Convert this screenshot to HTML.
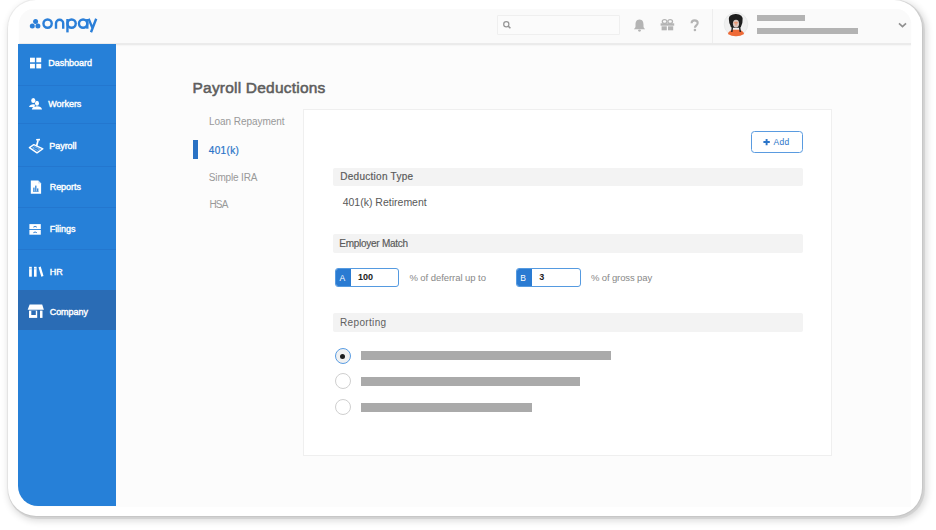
<!DOCTYPE html>
<html><head><meta charset="utf-8">
<style>
*{box-sizing:border-box;margin:0;padding:0}
html,body{width:936px;height:530px;overflow:hidden;background:#fff;font-family:"Liberation Sans",sans-serif}
div,svg{position:absolute}
.t{white-space:pre;line-height:1}
#frame{left:8px;top:0px;width:914px;height:516px;border-radius:28px;background:#fff;box-shadow:0 0 0 1px rgba(0,0,0,0.045),1.5px 1.5px 0 1.5px rgba(0,0,0,0.065),2.5px 3px 7px 2px rgba(0,0,0,0.14)}
#app{left:18.5px;top:9px;width:892.5px;height:498px;border-radius:15px 15px 0 20px;background:#fcfcfc;overflow:hidden}
#topbar{left:18.5px;top:9px;width:892.5px;height:35.8px;background:#fafafa;border-bottom:2px solid #ebebeb;box-shadow:0 1px 1.5px rgba(0,0,0,0.03);border-radius:15px 15px 0 0}
#side{left:18px;top:43.5px;width:98.4px;height:462.5px;background:#2680d8;border-radius:0 0 0 20px;overflow:hidden}
.sep{left:0;width:98px;height:1px;background:#2377cf}
.st{left:48.3px;color:#fff;font-size:9px;-webkit-text-stroke:0.4px #fff;letter-spacing:-0.05px}
.card{left:303px;top:109px;width:529px;height:347px;background:#fff;border:1px solid #efefef}
.bar{left:333px;width:470px;height:18px;background:#f3f3f3;border-radius:2px}
.hd{color:#5a5a5a;font-size:10px;-webkit-text-stroke:0.18px #5a5a5a}
.gray{height:9px;background:#aaa}
.radio{width:16px;height:16px;border-radius:50%;border:1.2px solid #cfcfcf;background:#fff}
</style></head><body>
<div id="frame"></div>
<div id="app"></div>
<div id="topbar"></div>

<!-- logo -->
<svg style="left:26px;top:14px" width="76" height="22" viewBox="26 14 76 22">
  <g fill="#2b7fd8">
    <circle cx="35.6" cy="21.6" r="2.5"/>
    <circle cx="32.3" cy="26.1" r="2.5"/>
    <circle cx="37.9" cy="26.1" r="2.5"/>
  </g>
  <g fill="none" stroke="#2b7fd8" stroke-width="2.4">
    <circle cx="47.6" cy="23.6" r="4.15"/>
    <path d="M56 28.7 V23.3 A3.6 3.6 0 0 1 63.2 23.3 V28.7"/>
    <circle cx="71.6" cy="23.6" r="4.15"/>
    <path d="M67.45 19 V32.4"/>
    <circle cx="83.1" cy="23.6" r="4.15"/>
    <path d="M87.3 19 V28.7"/>
    <path d="M88.6 18.8 L92.3 27.6 M96.2 18.8 L91 32.2"/>
  </g>
</svg>

<!-- search -->
<div style="left:497px;top:15px;width:123px;height:20px;border:1px solid #efefef;background:#fbfbfb;border-radius:1px"></div>
<svg style="left:502px;top:19px" width="12" height="12" viewBox="0 0 12 12"><circle cx="4.3" cy="5.2" r="2.6" fill="none" stroke="#969696" stroke-width="1.25"/><path d="M6.2 7.1 L8.4 9.3" stroke="#969696" stroke-width="1.5"/></svg>
<!-- bell -->
<svg style="left:630px;top:16px" width="20" height="18" viewBox="630 16 20 18"><path d="M639.5 19.4 C636.1 19.4 635.5 22.3 635.5 24.8 L635.5 26.6 C635.5 27.7 634.6 28.3 633.9 29.3 L645.1 29.3 C644.4 28.3 643.5 27.7 643.5 26.6 L643.5 24.8 C643.5 22.3 642.9 19.4 639.5 19.4Z" fill="#b4b4b4"/><ellipse cx="639.5" cy="30.6" rx="1.5" ry="1.1" fill="#b4b4b4"/></svg>
<!-- gift -->
<svg style="left:658px;top:16px" width="19" height="17" viewBox="658 16 19 17"><g fill="none" stroke="#b4b4b4" stroke-width="1.3"><ellipse cx="664.6" cy="21.6" rx="2.3" ry="1.9"/><ellipse cx="670.2" cy="21.6" rx="2.3" ry="1.9"/></g><g fill="#b4b4b4"><rect x="660.6" y="23.3" width="13.6" height="2.4"/><rect x="661.6" y="26.3" width="5.2" height="4"/><rect x="668" y="26.3" width="5.2" height="4"/></g></svg>
<!-- question -->
<svg style="left:688px;top:17px" width="13" height="16" viewBox="688 17 13 16"><path d="M691.6 23.3 C691.6 21.2 692.9 20.4 694.5 20.4 C696.3 20.4 697.7 21.4 697.7 23 C697.7 25.3 694.9 25.4 694.9 27.8" fill="none" stroke="#b4b4b4" stroke-width="2.1"/><circle cx="694.9" cy="30" r="1.3" fill="#b4b4b4"/></svg>
<div style="left:712px;top:9px;width:1px;height:34px;background:#eeeeee"></div>
<!-- avatar -->
<svg style="left:723px;top:11px" width="27" height="27" viewBox="723 11 27 27">
  <circle cx="736" cy="24.2" r="11.8" fill="#f0f0f0" stroke="#e4e6e6" stroke-width="0.7"/>
  <path d="M727.8 34 Q729.5 30.3 733 29.8 L739 29.8 Q742.5 30.3 744.2 34 Q740.5 36.3 736 36.3 Q731.5 36.3 727.8 34Z" fill="#ee6a37"/>
  <path d="M729 20.5 Q728.3 17 730.5 15.6 Q732.5 14 735.8 14.1 Q739.3 14 741.3 15.8 Q743.3 17.6 742.5 21 Q742.6 23.5 741.5 25.2 Q741.3 27.5 739.5 27.8 L732.2 27.8 Q730.4 27.5 730.3 25.2 Q729 23.3 729 20.5Z" fill="#1e1e1e"/>
  <ellipse cx="736" cy="23.6" rx="3.1" ry="3.9" fill="#d9c6bf"/>
  <path d="M733.8 22.8 H738.2 M736 21.5 V25.5" stroke="#f08a5d" stroke-width="0.9"/>
  <path d="M732.4 27.2 L731.8 32 M739.6 27.2 L740.3 32" stroke="#1e1e1e" stroke-width="1.4"/>
</svg>
<div style="left:757px;top:15px;width:48px;height:6px;background:#b3b3b3"></div>
<div style="left:757px;top:28.2px;width:101px;height:6px;background:#b3b3b3"></div>
<svg style="left:897px;top:21px" width="11" height="8" viewBox="0 0 11 8"><path d="M2 2.4 L5.5 5.7 L9 2.4" fill="none" stroke="#909090" stroke-width="1.7"/></svg>

<!-- sidebar -->
<div id="side">
  <div class="sep" style="top:41px"></div>
  <div class="sep" style="top:79.5px"></div>
  <div class="sep" style="top:122px"></div>
  <div class="sep" style="top:163px"></div>
  <div class="sep" style="top:205.2px"></div>
  <div style="left:0;top:246px;width:98.4px;height:40px;background:#2a6cb5"></div>
</div>
<div class="t st" style="top:59.2px">Dashboard</div>
<div class="t st" style="top:99.8px">Workers</div>
<div class="t st" style="top:141.8px;left:49.3px">Payroll</div>
<div class="t st" style="top:182.8px;left:49.7px">Reports</div>
<div class="t st" style="top:225.2px;left:49.7px">Filings</div>
<div class="t st" style="top:267.6px;left:49.7px">HR</div>
<div class="t st" style="top:308.4px;left:49.7px">Company</div>

<!-- sidebar icons -->
<svg style="left:28px;top:55px" width="16" height="16" viewBox="28 55 16 16"><g fill="#fff"><rect x="30" y="57.7" width="4.9" height="4.6"/><rect x="36.3" y="57.7" width="4.9" height="4.6"/><rect x="30" y="63.8" width="4.9" height="4.6"/><rect x="36.3" y="63.8" width="4.9" height="4.6"/></g></svg>
<svg style="left:27px;top:96px" width="18" height="16" viewBox="27 96 18 16"><g fill="#fff"><ellipse cx="33.3" cy="100.6" rx="2.1" ry="2.5"/><path d="M29 107 Q30 104.3 33.5 104.3 Q34.5 104.3 35 104.8 L35 107.3Z"/><ellipse cx="37" cy="103.2" rx="2" ry="2.5"/><path d="M31.8 109.6 Q32.5 106.3 37 106.3 Q41.3 106.3 42 109.6Z"/></g><path d="M35 105.6 L35 106.8" stroke="#2680d8" stroke-width="0.8"/></svg>
<svg style="left:27px;top:137px" width="18" height="18" viewBox="27 137 18 18"><g fill="none" stroke="#fff" stroke-linejoin="round"><path d="M29.4 147.6 L33.8 144.7 L42.9 148.8 L37 152.9 Z" stroke-width="1.4"/><path d="M32.6 148 L34.6 146.8 L39.8 149 L37.6 150.4Z" stroke-width="0.7" stroke-opacity="0.55"/><path d="M36.5 146.3 L38.1 140.3" stroke-width="1.7"/><path d="M36.2 139.8 L40 139.6" stroke-width="1.6"/></g></svg>
<svg style="left:28px;top:178px" width="16" height="18" viewBox="28 178 16 18"><path d="M30.8 180.6 L38.2 180.6 L41.1 183.6 L41.1 193.7 L30.8 193.7Z" fill="#fff"/><path d="M38.2 180.6 L38.2 183.6 L41.1 183.6Z" fill="#cfe2f6"/><g fill="#3a8ad9"><rect x="33.2" y="187.6" width="1.4" height="3.9"/><rect x="35.1" y="185.6" width="1.4" height="5.9"/><rect x="37" y="188.4" width="1.4" height="3.1"/><rect x="33" y="191.2" width="5.6" height="0.6"/></g></svg>
<svg style="left:27px;top:221px" width="16" height="16" viewBox="27 221 16 16"><g fill="#fff"><rect x="29.4" y="224.1" width="11.4" height="5"/><rect x="29.4" y="230" width="11.4" height="4.7"/></g><g fill="none" stroke="#2a7ad0" stroke-width="1"><path d="M33.4 227.1 Q35.1 225.7 36.8 227.1"/><path d="M33.4 232.7 Q35.1 231.3 36.8 232.7"/></g></svg>
<svg style="left:27px;top:264px" width="18" height="15" viewBox="27 264 18 15"><g fill="#fff"><rect x="29.1" y="266.8" width="2.7" height="9.9"/><rect x="34" y="266.8" width="2.6" height="9.9"/><path d="M38.5 267.3 L40.7 266.6 L43.5 275.9 L41.3 276.7Z"/></g><g fill="#6aa6e6"><rect x="29.1" y="268.6" width="2.7" height="0.6"/><rect x="34" y="268.6" width="2.6" height="0.6"/></g></svg>
<svg style="left:26px;top:302px" width="20" height="18" viewBox="26 302 20 18"><g fill="#fff"><path d="M29.6 304.5 L42.2 304.5 L43.9 309.8 L27.7 309.8Z"/><rect x="29" y="310.6" width="8.2" height="7.3"/><rect x="40" y="310.6" width="2.5" height="7.3"/></g><rect x="31.3" y="310.6" width="4.5" height="4.4" fill="#2a6cb5"/></svg>

<!-- title & nav -->
<div class="t" style="left:192.5px;top:80px;font-size:15.5px;color:#5e5e5e;-webkit-text-stroke:0.55px #5e5e5e;letter-spacing:0.21px">Payroll Deductions</div>
<div class="t" style="left:209px;top:117px;font-size:10px;color:#999;letter-spacing:-0.05px">Loan Repayment</div>
<div style="left:193px;top:139.8px;width:4.5px;height:19px;background:#2a72c4"></div>
<div class="t" style="left:208.8px;top:145.7px;font-size:10px;color:#2a74c8;letter-spacing:0.35px;-webkit-text-stroke:0.2px #2a74c8">401(k)</div>
<div class="t" style="left:208.8px;top:172.5px;font-size:10px;color:#999;letter-spacing:-0.15px">Simple IRA</div>
<div class="t" style="left:209.4px;top:199.5px;font-size:10px;color:#999;letter-spacing:-0.8px">HSA</div>

<div class="card"></div>
<div style="left:751px;top:131.2px;width:52.3px;height:22px;border:1.3px solid #5a9be0;border-radius:3.5px;background:#fff"></div>
<svg style="left:762px;top:137px" width="10" height="10" viewBox="762 137 10 10"><path d="M766.6 138.9 V145.2 M763.4 142 H769.8" stroke="#2a74c8" stroke-width="1.9"/></svg>
<div class="t" style="left:773.5px;top:137.9px;font-size:8.5px;color:#2a74c8;letter-spacing:0.3px">Add</div>

<div class="bar" style="top:167.5px"></div>
<div class="t hd" style="left:340.3px;top:171.5px;letter-spacing:0.27px">Deduction Type</div>
<div class="t" style="left:342.7px;top:197.2px;font-size:10.5px;color:#595959;letter-spacing:0px">401(k) Retirement</div>
<div class="bar" style="top:234.2px;height:19px"></div>
<div class="t hd" style="left:339.3px;top:239px;letter-spacing:-0.27px">Employer Match</div>

<div style="left:334.6px;top:268px;width:64px;height:18.6px;border:1.2px solid #559ae0;border-radius:3px;background:#fff;overflow:hidden">
  <div style="left:-1px;top:-1px;width:16.5px;height:19px;background:#2a7bd2"></div>
</div>
<div class="t" style="left:339.5px;top:273.6px;font-size:8.5px;color:#fff">A</div>
<div class="t" style="left:358px;top:272.9px;font-size:9px;font-weight:bold;color:#222">100</div>
<div class="t" style="left:409.4px;top:273px;font-size:9.5px;color:#888;letter-spacing:-0.06px">% of deferral up to</div>
<div style="left:516px;top:268px;width:64.5px;height:18.8px;border:1.2px solid #559ae0;border-radius:3px;background:#fff;overflow:hidden">
  <div style="left:-1px;top:-1px;width:16px;height:19px;background:#2a7bd2"></div>
</div>
<div class="t" style="left:520.2px;top:273.6px;font-size:8.5px;color:#fff">B</div>
<div class="t" style="left:539.3px;top:273.3px;font-size:9px;font-weight:bold;color:#222">3</div>
<div class="t" style="left:590.9px;top:273px;font-size:9.5px;color:#888;letter-spacing:-0.12px">% of gross pay</div>

<div class="bar" style="top:313.1px;height:19px"></div>
<div class="t" style="left:340px;top:317.5px;font-size:10px;color:#606060;letter-spacing:0.35px">Reporting</div>

<div class="radio" style="left:334.8px;top:348.2px;border-color:#5a9de3;background:#f1f1f1"></div>
<div style="left:340.4px;top:353.5px;width:5px;height:5px;border-radius:50%;background:#1d1d1d"></div>
<div class="gray" style="left:361px;top:351.3px;width:250px"></div>
<div class="radio" style="left:334.8px;top:373.4px"></div>
<div class="gray" style="left:361px;top:377px;width:219px"></div>
<div class="radio" style="left:334.8px;top:398.8px"></div>
<div class="gray" style="left:361px;top:402.7px;width:170.5px"></div>
</body></html>
